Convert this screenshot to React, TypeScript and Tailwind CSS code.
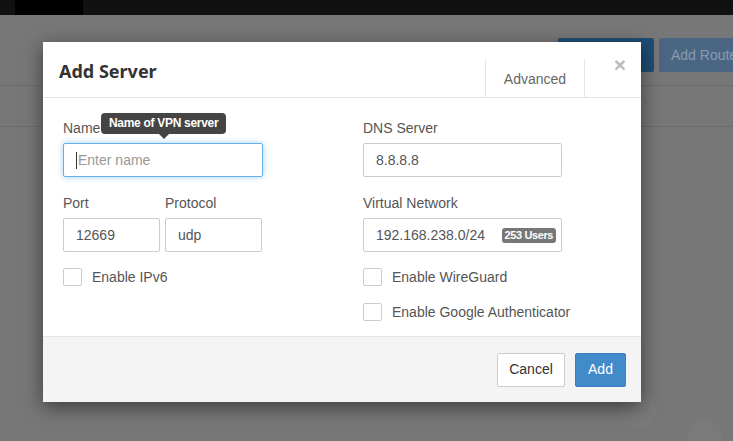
import React from 'react';

const font = { fontFamily: '"Liberation Sans", Arial, sans-serif' };

const Checkbox = ({ label }: { label: string }) => (
  <label className="flex items-center h-[18px] text-[14px] text-[#555]">
    <span className="w-[19px] h-[18px] border border-[#ccc] rounded-[2px] bg-white mr-[10px]" />
    {label}
  </label>
);

const Field = ({ label, children, className = '' }: { label: string; children: React.ReactNode; className?: string }) => (
  <div className={className}>
    <div className="h-[20px] leading-[20px] text-[14px] text-[#555] mb-[5px]">{label}</div>
    {children}
  </div>
);

const Input = ({ value, width, children }: { value: string; width: string; children?: React.ReactNode }) => (
  <div className={`${width} h-[34px] border border-[#ccc] rounded-[2px] bg-white flex items-center pl-[12px] pr-[5px] text-[14px] text-[#555]`}>
    <span className="flex-1">{value}</span>
    {children}
  </div>
);

const App = () => {
  return (
    <div className="relative w-[733px] h-[441px] overflow-hidden bg-[#777]" style={font}>
      {/* Top nav */}
      <div className="h-[15px] bg-[#111] flex">
        <div className="ml-[15px] w-[68px] h-full bg-black" />
      </div>

      {/* Page behind overlay */}
      <div className="flex justify-end gap-[5px] mt-[23px]">
        <div className="w-[96px] h-[34px] rounded-[2px] bg-[#1f4d74]" />
        <div className="w-[74px] h-[34px] rounded-l-[2px] bg-[#4a6683] text-[#8a9bb0] text-[14px] leading-[34px] pl-[12px] whitespace-nowrap overflow-hidden">
          Add Route
        </div>
      </div>
      <div className="mt-[13px] h-px bg-[#6b6b6b]" />
      <div className="mt-[40px] h-px bg-[#6b6b6b]" />
      <div className="absolute left-[620px] top-[392px] w-[36px] h-[36px] rounded-full bg-[#7a7a7a]" />
      <div className="absolute left-[687px] top-[420px] w-[36px] h-[36px] rounded-full bg-[#7a7a7a]" />

      {/* Modal */}
      <div className="absolute left-[43px] top-[42px] w-[598px] h-[360px] bg-white flex flex-col shadow-[0_5px_18px_rgba(0,0,0,0.5)]">
        {/* Header */}
        <div className="relative h-[56px] border-b border-[#e5e5e5] flex">
          <div
            className="pl-[16px] pt-[16px] text-[18px] font-bold text-[#333]"
            style={{ fontFamily: '"Noto Sans", "Open Sans", sans-serif' }}
          >
            Add Server
          </div>
          <div className="ml-auto mt-[17px] w-[100px] h-[38px] border-x border-[#e5e5e5] flex items-center justify-center text-[14px] text-[#666] mr-[56px] pt-[3px]">
            Advanced
          </div>
          <div className="absolute right-[15px] top-[12px] text-[21px] font-bold text-[#bbb] leading-none">×</div>
        </div>

        {/* Body */}
        <div className="flex-1 flex pl-[20px] pt-[20px]">
          <div className="w-[300px] shrink-0">
            <Field label="Name" className="relative">
              <div className="absolute left-[38px] top-[-5px] flex flex-col items-center">
                <div className="h-[21px] px-[8px] rounded-[4px] bg-[#444] text-white text-[12px] font-bold leading-[21px] whitespace-nowrap tracking-[-0.3px]">
                  Name of VPN server
                </div>
                <div className="w-0 h-0 border-x-[5px] border-x-transparent border-t-[5px] border-t-[#444]" />
              </div>
              <div className="w-[200px] h-[34px] border border-[#66afe9] rounded-[2px] shadow-[0_0_6px_rgba(102,175,233,0.6)] flex items-center pl-[12px] text-[14px] text-[#999]">
                <span className="w-px h-[17px] bg-[#333] mr-px" />
                Enter name
              </div>
            </Field>
            <div className="flex gap-[5px] mt-[16px]">
              <Field label="Port">
                <Input value="12669" width="w-[97px]" />
              </Field>
              <Field label="Protocol">
                <Input value="udp" width="w-[97px]" />
              </Field>
            </div>
            <div className="mt-[16px]">
              <Checkbox label="Enable IPv6" />
            </div>
          </div>
          <div className="w-[260px] shrink-0">
            <Field label="DNS Server">
              <Input value="8.8.8.8" width="w-[199px]" />
            </Field>
            <Field label="Virtual Network" className="mt-[16px]">
              <Input value="192.168.238.0/24" width="w-[199px]">
                <span className="h-[15px] px-[3px] rounded-[3px] bg-[#777] text-white text-[11px] font-bold leading-[15px] tracking-[-0.4px]">
                  253 Users
                </span>
              </Input>
            </Field>
            <div className="mt-[16px] flex flex-col gap-[17px]">
              <Checkbox label="Enable WireGuard" />
              <Checkbox label="Enable Google Authenticator" />
            </div>
          </div>
        </div>

        {/* Footer */}
        <div className="h-[66px] border-t border-[#e5e5e5] bg-[#f4f4f4] flex items-center justify-end gap-[10px] pr-[15px]">
          <button className="w-[68px] h-[34px] border border-[#ccc] rounded-[2px] bg-white text-[14px] text-[#333]">
            Cancel
          </button>
          <button className="w-[51px] h-[34px] border border-[#3a7fc0] rounded-[2px] bg-[#428bca] text-[14px] text-white">
            Add
          </button>
        </div>
      </div>
    </div>
  );
};

export default App;
